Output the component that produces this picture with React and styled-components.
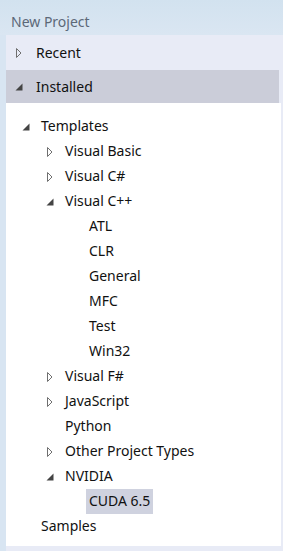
import React from "react";
import styled, { createGlobalStyle } from "styled-components";

const GlobalStyle = createGlobalStyle`
  html, body {
    margin: 0;
    padding: 0;
    background: #d8e5f2;
  }
  body {
    font-family: "Noto Sans", "Open Sans", sans-serif;
  }
`;

const tree = [
  { label: "Templates", level: 0, state: "open" },
  { label: "Visual Basic", level: 1, state: "closed" },
  { label: "Visual C#", level: 1, state: "closed" },
  { label: "Visual C++", level: 1, state: "open" },
  { label: "ATL", level: 2 },
  { label: "CLR", level: 2 },
  { label: "General", level: 2 },
  { label: "MFC", level: 2 },
  { label: "Test", level: 2 },
  { label: "Win32", level: 2 },
  { label: "Visual F#", level: 1, state: "closed" },
  { label: "JavaScript", level: 1, state: "closed" },
  { label: "Python", level: 1 },
  { label: "Other Project Types", level: 1, state: "closed" },
  { label: "NVIDIA", level: 1, state: "open" },
  { label: "CUDA 6.5", level: 2, selected: true },
  { label: "Samples", level: 0 },
];

const Arrow = ({ state }) =>
  state === "open" ? (
    <svg width="8" height="8" viewBox="0 0 8 8">
      <path d="M7.5 0.5 L7.5 7.5 L0.5 7.5 Z" fill="#444" />
    </svg>
  ) : (
    <svg width="7" height="10" viewBox="0 0 7 10">
      <path d="M1.5 0.5 L6 5 L1.5 9.5 Z" fill="none" stroke="#6f6f6f" />
    </svg>
  );

const App = () => {
  return (
    <>
      <GlobalStyle />
      <Window>
        <Header>New Project</Header>
        <Panel>
          <Section>
            <Toggle>
              <Arrow state="closed" />
            </Toggle>
            Recent
          </Section>
          <Section active>
            <Toggle>
              <Arrow state="open" />
            </Toggle>
            Installed
          </Section>
          <TreeBox>
            {tree.map((node) => (
              <Node key={node.label} level={node.level}>
                <Toggle tree>{node.state && <Arrow state={node.state} />}</Toggle>
                <Label selected={node.selected}>{node.label}</Label>
              </Node>
            ))}
          </TreeBox>
        </Panel>
      </Window>
    </>
  );
};

export default App;

const Window = styled.div`
  width: 283px;
  height: 551px;
  display: flex;
  flex-direction: column;
  background: #d8e5f2;
  overflow: hidden;
`;

const Header = styled.div`
  height: 35px;
  box-sizing: border-box;
  padding: 12px 0 0 11px;
  font-size: 14px;
  color: #5c6878;
  background: linear-gradient(#d2e2ef, #dae6f2);
`;

const Panel = styled.div`
  flex: 1;
  margin-left: 6px;
  background: #e8ebf6;
  display: flex;
  flex-direction: column;
  padding-bottom: 5px;
`;

const Section = styled.div`
  height: ${(p) => (p.active ? "33px" : "35px")};
  width: ${(p) => (p.active ? "273px" : "auto")};
  display: flex;
  align-items: center;
  padding-left: 9px;
  box-sizing: border-box;
  font-size: 14px;
  color: #111;
  background: ${(p) => (p.active ? "#cbcdd9" : "transparent")};
`;

const Toggle = styled.span`
  width: ${(p) => (p.tree ? "24px" : "21px")};
  padding-left: ${(p) => (p.tree ? "5px" : "0")};
  box-sizing: border-box;
  display: flex;
  align-items: center;
  flex-shrink: 0;
`;

const TreeBox = styled.div`
  flex: 1;
  width: 275px;
  background: #ffffff;
  padding-top: 11px;
`;

const Node = styled.div`
  height: 25px;
  display: flex;
  align-items: center;
  padding-left: ${(p) => 11 + p.level * 24}px;
  font-size: 14px;
  color: #111;
`;

const Label = styled.span`
  padding: 2px 3px 3px;
  margin-left: -3px;
  line-height: 20px;
  background: ${(p) => (p.selected ? "#cfd2df" : "transparent")};
`;
